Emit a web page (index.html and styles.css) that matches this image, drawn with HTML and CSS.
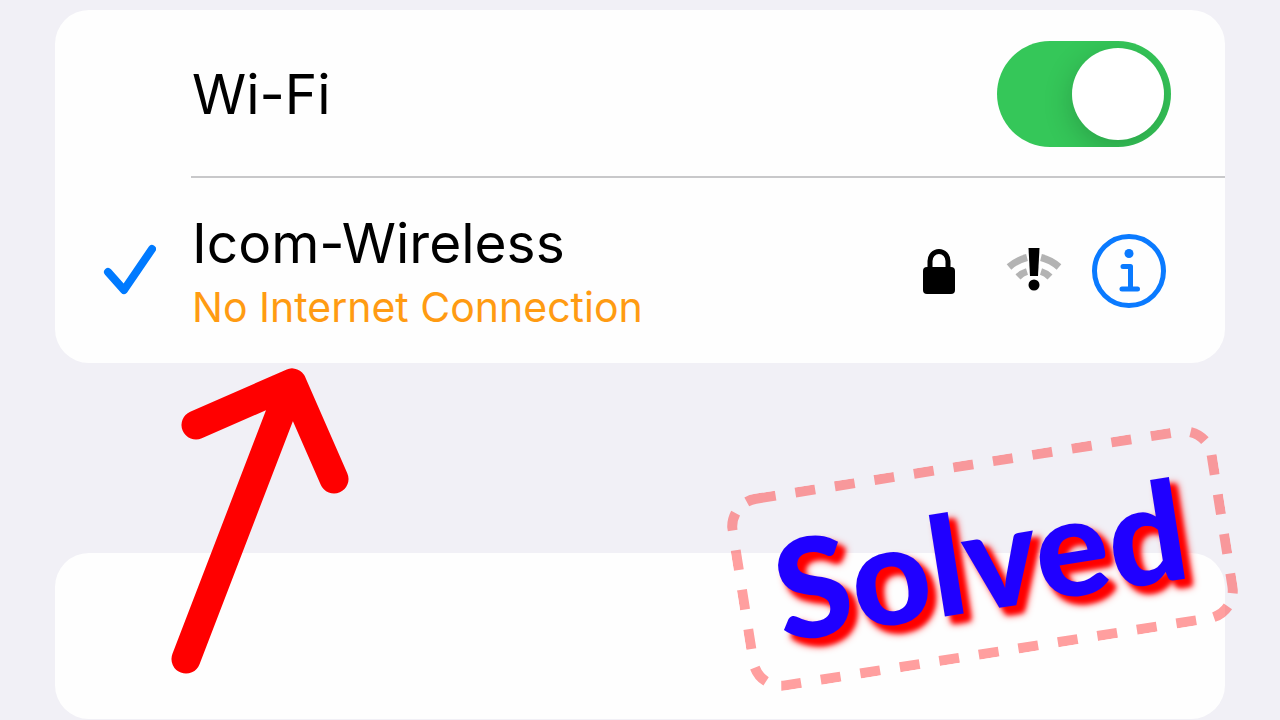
FILE: index.html
```html
<!DOCTYPE html>
<html lang="en">
<head>
<meta charset="utf-8">
<title>Wi-Fi</title>
<link rel="stylesheet" href="styles.css">
</head>
<body>
<main class="page">
  <section class="card">
    <div class="row row-toggle">
      <label class="title" for="wifi">Wi-Fi</label>
      <input class="switch" type="checkbox" role="switch" id="wifi" checked>
    </div>
    <div class="row row-network">
      <svg class="check" viewBox="0 0 54 54" aria-hidden="true"><path d="M6 28 L22 46 L50 5"/></svg>
      <div class="network">
        <span class="title">Icom-Wireless</span>
        <span class="status">No Internet Connection</span>
      </div>
      <div class="icons">
        <svg class="lock" viewBox="0 0 32 46" aria-hidden="true">
          <path class="shackle" d="M7 22 V13 A9 9.500 0 0 1 25 13 V22"/>
          <rect x="0" y="19" width="32" height="27" rx="4"/>
        </svg>
        <svg class="signal" viewBox="0 0 54 44" aria-hidden="true">
          <path class="wave" d="M2 18 Q10 11 20 8.500 M34 8.500 Q44 11 52 18"/>
          <path class="wave" d="M11 28 Q15 24 20 22.500 M34 22.500 Q39 24 43 28"/>
          <path d="M21.500 -1 H32.500 L31 27 H23 Z"/>
          <circle cx="27" cy="36" r="5.500"/>
        </svg>
        <button class="info" type="button" aria-label="Network details">
          <svg viewBox="0 0 74 74" aria-hidden="true">
            <circle class="ring" cx="37" cy="37" r="34.500"/>
            <circle class="dot" cx="37" cy="19.500" r="4.500"/>
            <path class="stem" d="M31 32.500 H38.500 V55 M30 55 H45.500"/>
          </svg>
        </button>
      </div>
    </div>
  </section>
  <section class="card card-empty"></section>

  <svg class="arrow" viewBox="0 0 170 306" aria-hidden="true">
    <path d="M5 291 L111 15 M15 57 L111 15 L153 111"/>
  </svg>

  <div class="stamp">
    <svg class="frame" viewBox="0 0 495 199" aria-hidden="true">
      <rect x="5" y="5" width="485" height="189" rx="28"/>
    </svg>
    <span class="stamp-text">Solved</span>
  </div>
</main>
</body>
</html>
```
FILE: styles.css
```css
* { box-sizing: border-box; }

body {
  margin: 0;
  background: #f1f0f6;
  color: #000;
  font-family: Inter, "Liberation Sans", sans-serif;
}

.page {
  position: relative;
  min-height: 100vh;
  padding: 10px 55px 0;
  overflow: hidden;
}

.card {
  background: #fefefe;
  border-radius: 34px;
}

.card-empty {
  height: 166px;
  margin-top: 190px;
}

.row {
  display: flex;
  align-items: center;
}

.row-toggle {
  justify-content: space-between;
  height: 168px;
  margin-left: 136px;
  padding: 2px 54px 0 1px;
  border-bottom: 2px solid #c8c8ca;
}

.row-network {
  height: 185px;
  padding: 0 59px 0 47px;
}

.title {
  font-size: 55px;
  line-height: 68px;
}

.switch {
  appearance: none;
  width: 174px;
  height: 106px;
  margin: 0;
  padding: 7px;
  border-radius: 53px;
  background: #35c759;
  overflow: hidden;
}

.switch::before {
  content: "";
  display: block;
  width: 92px;
  height: 92px;
  border-radius: 50%;
  background: #fff;
  box-shadow: 0 8px 30px rgba(0, 0, 0, 0.2);
}

.switch:checked::before { margin-left: auto; }

.check {
  width: 54px;
  height: 54px;
  margin-right: 36px;
  fill: none;
  stroke: #007aff;
  stroke-width: 8;
  stroke-linecap: round;
  stroke-linejoin: round;
}

.network {
  display: flex;
  flex: 1;
  flex-direction: column;
  padding-top: 5px;
}

.status {
  color: #ff9b12;
  font-size: 41px;
  line-height: 60px;
}

.icons {
  display: flex;
  align-items: center;
}

.lock {
  width: 32px;
  height: 46px;
  margin-right: 52px;
}

.shackle {
  fill: none;
  stroke: #000;
  stroke-width: 5;
}

.signal {
  width: 54px;
  height: 44px;
  margin-right: 31px;
  overflow: visible;
}

.wave {
  fill: none;
  stroke: #b3b3b3;
  stroke-width: 7;
}

.info {
  display: block;
  width: 74px;
  height: 74px;
  padding: 0;
  border: 0;
  background: none;
}

.info svg {
  display: block;
  fill: none;
  stroke: #0a7aff;
  stroke-width: 5;
}

.info .dot {
  fill: #0a7aff;
  stroke: none;
}

.info .stem {
  stroke-linecap: round;
  stroke-linejoin: round;
}

.arrow {
  position: absolute;
  top: 368px;
  left: 181px;
  width: 170px;
  height: 306px;
  overflow: visible;
  fill: none;
  stroke: #f00;
  stroke-width: 29;
  stroke-linecap: round;
  stroke-linejoin: round;
}

.stamp {
  position: absolute;
  top: 459px;
  left: 735px;
  display: flex;
  align-items: center;
  justify-content: center;
  width: 495px;
  height: 199px;
  padding: 0 5px 4px 0;
  transform: rotate(-9deg);
}

/* Dashes run clockwise from the top-left; each corner holds one shorter dash. */
.frame {
  position: absolute;
  inset: 0;
  fill: none;
  stroke: #ff4040;
  stroke-opacity: 0.5;
  stroke-width: 10;
  stroke-dasharray:
    20 20 20 20 20 20 20 20 20 20 20 20 20 20 20 20 20 20 20 20 20 20
    17 16
    20 20 20 20 20 20 20 14
    18 18
    20 20 20 20 20 20 20 20 20 20 20 20 20 20 20 20 20 20 20 20 20 16
    18 19
    20 20 20 20 20 20
    18 16
    20 20;
}

.stamp-text {
  color: #2000ff;
  font-family: Lato, "Open Sans", sans-serif;
  font-size: 138px;
  font-weight: 900;
  line-height: 180px;
  text-shadow: 6px 8px 8px #f00, 6px 8px 5px #f00;
}
```
